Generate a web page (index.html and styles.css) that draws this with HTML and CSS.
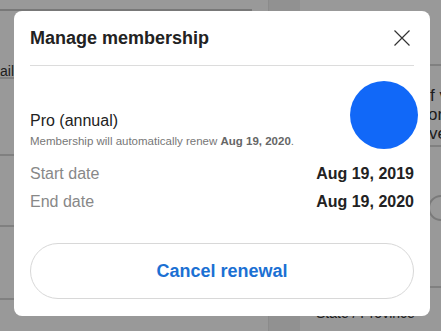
FILE: index.html
```html
<!DOCTYPE html>
<html>
<head>
<meta charset="utf-8">
<link rel="stylesheet" href="styles.css">
</head>
<body>
<div class="page">
  <div class="left-col">
    <div class="top-bar"></div>
    <div class="row row-a"><span class="bg-text">Detail</span></div>
    <div class="row row-b"></div>
    <div class="row row-c"></div>
    <div class="row row-d"></div>
  </div>
  <div class="strip"></div>
  <div class="right-col">
    <div class="rrow rrow-a"></div>
    <div class="rrow rrow-b"><p class="bg-para"><span class="l1">f v</span><br><span class="l2">or</span><br><span class="l3">ve</span></p></div>
    <div class="rrow rrow-c"><span class="radio"></span></div>
    <div class="rrow rrow-d"><span class="bg-label">State / Province</span></div>
  </div>
</div>
<div class="overlay"></div>
<div class="modal">
  <div class="modal-header">
    <h2 class="modal-title">Manage membership</h2>
    <button class="close-btn" aria-label="Close">
      <svg width="16" height="16" viewBox="0 0 16 16"><path d="M0.5 0.5 L15.5 15.5 M15.5 0.5 L0.5 15.5" stroke="#333" stroke-width="1.2" fill="none"/></svg>
    </button>
  </div>
  <div class="plan">
    <div class="plan-text">
      <div class="plan-name">Pro (annual)</div>
      <div class="plan-note">Membership will automatically renew <b>Aug 19, 2020</b>.</div>
    </div>
    <div class="plan-badge"></div>
  </div>
  <div class="dates">
    <div class="date-row"><span class="date-label">Start date</span><span class="date-value">Aug 19, 2019</span></div>
    <div class="date-row"><span class="date-label">End date</span><span class="date-value">Aug 19, 2020</span></div>
  </div>
  <button class="cancel-btn">Cancel renewal</button>
</div>
</body>
</html>
```
FILE: styles.css
```css
html, body {
  margin: 0;
  padding: 0;
}
body {
  width: 441px;
  height: 331px;
  overflow: hidden;
  background: #fff;
  font-family: "Liberation Sans", Arial, sans-serif;
  position: relative;
}
.page {
  display: grid;
  grid-template-columns: 268px 32px 1fr;
  height: 331px;
}
.left-col {
  display: flex;
  flex-direction: column;
}
.top-bar {
  height: 9px;
  width: 252px;
  border-bottom: 2px solid #c8c8c8;
}
.row {
  border-bottom: 2px solid #d6d6d6;
  position: relative;
}
.row-a { height: 66px; }
.row-b { height: 75px; }
.row-c { height: 69px; }
.row-d { height: 71px; }
.bg-text {
  position: absolute;
  right: 254px;
  top: 52px;
  font-size: 14px;
  color: #333;
  white-space: nowrap;
}
.strip {
  background: #f2f2f2;
  border-left: 1px solid #e8e8e8;
}
.right-col {
  display: flex;
  flex-direction: column;
}
.rrow {
  border-bottom: 2px solid #d6d6d6;
  position: relative;
  overflow: hidden;
}
.rrow-a { height: 64px; }
.rrow-b { height: 79px; }
.rrow-c { height: 139px; }
.rrow-d { border-bottom: none; flex: 1; }
.bg-para {
  margin: 0;
  position: absolute;
  left: 130px;
  top: 20px;
  font-size: 17px;
  line-height: 19px;
  color: #333;
  white-space: nowrap;
}
.bg-para .l2 { margin-left: -2px; }
.bg-para .l3 { margin-left: -1px; }
.radio {
  position: absolute;
  left: 128px;
  top: 48px;
  width: 22px;
  height: 22px;
  border: 2px solid #ccc;
  border-radius: 50%;
}
.bg-label {
  position: absolute;
  left: 16px;
  top: 17px;
  font-size: 14px;
  color: #333;
}
.overlay {
  position: absolute;
  inset: 0;
  background: rgba(0, 0, 0, 0.4);
}
.modal {
  position: absolute;
  left: 14px;
  top: 11px;
  width: 416px;
  height: 305px;
  box-sizing: border-box;
  padding: 0 16px 17px;
  background: #fff;
  border-radius: 8px;
  display: flex;
  flex-direction: column;
}
.modal-header {
  height: 54px;
  border-bottom: 1px solid #dcdcdc;
  display: flex;
  align-items: center;
  justify-content: space-between;
  flex-shrink: 0;
}
.modal-title {
  margin: 0;
  font-size: 18px;
  font-weight: bold;
  color: #222;
}
.close-btn {
  border: none;
  background: none;
  padding: 0;
  width: 16px;
  height: 16px;
  margin-right: 4px;
  display: block;
}
.close-btn svg { display: block; }
.plan {
  display: flex;
  align-items: flex-end;
  justify-content: space-between;
  margin-top: 15px;
}
.plan-name {
  font-size: 16px;
  line-height: 20px;
  color: #222;
}
.plan-note {
  font-size: 11.5px;
  line-height: 16px;
  color: #777;
  margin-top: 2px;
}
.plan-note b {
  color: #666;
}
.plan-badge {
  width: 68px;
  height: 68px;
  border-radius: 50%;
  background: #1168f8;
  margin-right: -4px;
  flex-shrink: 0;
}
.dates {
  margin-top: 11px;
}
.date-row {
  display: flex;
  justify-content: space-between;
  font-size: 16px;
  line-height: 28px;
}
.date-label { color: #888; }
.date-value { color: #222; font-weight: bold; }
.cancel-btn {
  margin-top: auto;
  height: 56px;
  border: 1px solid #d8d8d8;
  border-radius: 28px;
  background: #fff;
  font-family: "Liberation Sans", Arial, sans-serif;
  font-size: 18px;
  font-weight: bold;
  color: #1b70d3;
  width: 100%;
}
```
